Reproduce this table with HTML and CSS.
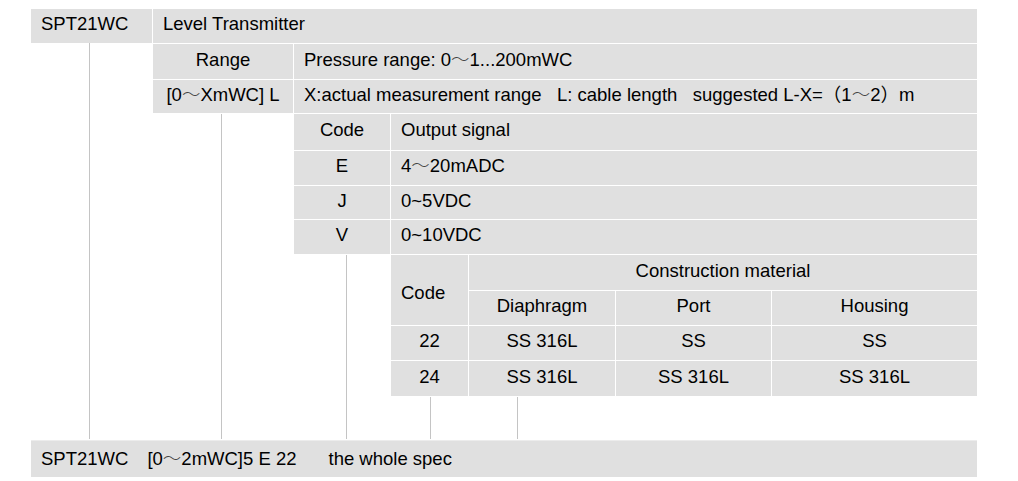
FILE: index.html
```html
<!DOCTYPE html>
<html>
<head>
<meta charset="utf-8">
<link rel="stylesheet" href="styles.css">
</head>
<body>
<div class="sheet">
  <div class="cell r1 c1">SPT21WC</div>
  <div class="cell r1 c2-end">Level Transmitter</div>

  <div class="cell r2 c2 center">Range</div>
  <div class="cell r2 c3-end">Pressure range: 0<span class="wave">～</span>1...200mWC</div>

  <div class="cell r3 c2 center">[0<span class="wave">～</span>XmWC] L</div>
  <div class="cell r3 c3-end">X:actual measurement range&nbsp;&nbsp; L: cable length&nbsp;&nbsp; suggested L-X=（1<span class="wave">～</span>2）m</div>

  <div class="cell r4 c3 center">Code</div>
  <div class="cell r4 c4-end">Output signal</div>

  <div class="cell r5 c3 center">E</div>
  <div class="cell r5 c4-end">4<span class="wave">～</span>20mADC</div>

  <div class="cell r6 c3 center">J</div>
  <div class="cell r6 c4-end">0~5VDC</div>

  <div class="cell r7 c3 center">V</div>
  <div class="cell r7 c4-end">0~10VDC</div>

  <div class="cell r8-9 c4 code-tall">Code</div>
  <div class="cell r8 c5-end center">Construction material</div>

  <div class="cell r9 c5 center">Diaphragm</div>
  <div class="cell r9 c6 center">Port</div>
  <div class="cell r9 c7 center">Housing</div>

  <div class="cell r10 c4 center">22</div>
  <div class="cell r10 c5 center">SS 316L</div>
  <div class="cell r10 c6 center">SS</div>
  <div class="cell r10 c7 center">SS</div>

  <div class="cell r11 c4 center">24</div>
  <div class="cell r11 c5 center">SS 316L</div>
  <div class="cell r11 c6 center">SS 316L</div>
  <div class="cell r11 c7 center">SS 316L</div>

  <div class="link link-a"></div>
  <div class="link link-b"></div>
  <div class="link link-c"></div>
  <div class="link link-d"></div>
  <div class="link link-e"></div>

  <div class="cell summary">
    <span>SPT21WC</span>
    <span class="part-2">[0<span class="wave">～</span>2mWC]5 E 22</span>
    <span class="part-3">the whole spec</span>
  </div>
</div>
</body>
</html>
```
FILE: styles.css
```css
html, body {
  margin: 0;
  padding: 0;
  background: #ffffff;
}

body {
  font-family: "Liberation Sans", Arial, "Noto Sans CJK SC", sans-serif;
  font-size: 18.5px;
  color: #000000;
}

.sheet {
  margin: 9px 0 0 31px;
  width: 946px;
  display: grid;
  grid-template-columns: 121px 140px 96px 77px 146px 155px 205px;
  grid-template-rows: 34px 35px 33px 36px 34px 33px 34px 35px 34px 34px 35px 42px 37px;
  gap: 1px;
}

.cell {
  background: #e0e0e0;
  display: flex;
  align-items: center;
  padding: 0 0 3px 10px;
  white-space: nowrap;
  line-height: 1;
}

.cell.center {
  justify-content: center;
  padding-left: 0;
}

.cell.code-tall {
  padding: 6px 0 0 10px;
}

.wave {
  font-weight: 200;
  color: #444444;
}

/* rows */
.r1 { grid-row: 1; }
.r2 { grid-row: 2; }
.r3 { grid-row: 3; }
.r4 { grid-row: 4; }
.r5 { grid-row: 5; }
.r6 { grid-row: 6; }
.r7 { grid-row: 7; }
.r8 { grid-row: 8; }
.r8-9 { grid-row: 8 / 10; }
.r9 { grid-row: 9; }
.r10 { grid-row: 10; }
.r11 { grid-row: 11; }

/* columns */
.c1 { grid-column: 1; }
.c2 { grid-column: 2; }
.c3 { grid-column: 3; }
.c4 { grid-column: 4; }
.c5 { grid-column: 5; }
.c6 { grid-column: 6; }
.c7 { grid-column: 7; }
.c2-end { grid-column: 2 / -1; }
.c3-end { grid-column: 3 / -1; }
.c4-end { grid-column: 4 / -1; }
.c5-end { grid-column: 5 / -1; }

/* connector lines */
.link {
  border-left: 1px solid #c4c4c4;
  width: 0;
}
.link-a { grid-column: 1; grid-row: 2 / 13; margin-left: 58px; margin-top: -1px; }
.link-b { grid-column: 2; grid-row: 4 / 13; margin-left: 68px; }
.link-c { grid-column: 3; grid-row: 8 / 13; margin-left: 52px; }
.link-d { grid-column: 4; grid-row: 12 / 13; margin-left: 39px; }
.link-e { grid-column: 5; grid-row: 12 / 13; margin-left: 48px; }

.summary {
  grid-row: 13;
  grid-column: 1 / -1;
  padding-bottom: 0;
  border-top: 1px solid #ececec;
}

.part-2 { margin-left: 19px; }
.part-3 { margin-left: 32px; }
```
